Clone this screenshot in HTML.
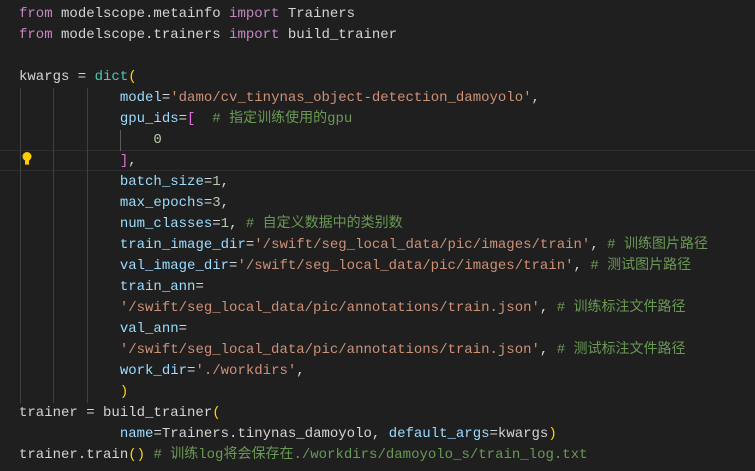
<!DOCTYPE html>
<html><head><meta charset="utf-8"><style>
html,body{margin:0;padding:0;background:#1f1f1f;width:755px;height:471px;overflow:hidden}
.c{position:absolute;left:19px;top:3.5px;font:14px/21px "Liberation Mono","Noto Sans CJK SC",monospace;color:#d4d4d4;white-space:pre}
.k{color:#c586c0}.f{color:#4ec9b0}.p{color:#9cdcfe}.s{color:#ce9178}.m{color:#6a9955}.n{color:#b5cea8}.y{color:#ffd700}.v{color:#da70d6}.fn{color:#dcdcaa}
.g{position:absolute;width:1px;background:#404040}
.hl{position:absolute;left:0;width:755px;top:150px;height:19px;border-top:1px solid #2e2e2e;border-bottom:1px solid #2e2e2e}
</style></head><body>
<div class="hl"></div>
<div class="g" style="left:20px;top:88px;height:315px"></div>
<div class="g" style="left:53px;top:88px;height:315px"></div>
<div class="g" style="left:87px;top:88px;height:315px"></div>
<div class="g" style="left:120px;top:130px;height:21px;background:#5a5a5a"></div>
<svg style="position:absolute;left:21px;top:151px" width="12" height="15" viewBox="0 0 12 15"><circle cx="6" cy="5.5" r="4.5" fill="#ffcc00"/><rect x="4" y="9" width="4" height="4" fill="#ffcc00"/><rect x="4" y="13" width="4" height="1" fill="#b08c00"/></svg>
<div class="c"><span class="k">from</span> modelscope.metainfo <span class="k">import</span> Trainers
<span class="k">from</span> modelscope.trainers <span class="k">import</span> build_trainer

kwargs = <span class="f">dict</span><span class="y">(</span>
            <span class="p">model</span>=<span class="s">'damo/cv_tinynas_object-detection_damoyolo'</span>,
            <span class="p">gpu_ids</span>=<span class="v">[</span>  <span class="m"># 指定训练使用的gpu</span>
                <span class="n">0</span>
            <span class="v">]</span>,
            <span class="p">batch_size</span>=<span class="n">1</span>,
            <span class="p">max_epochs</span>=<span class="n">3</span>,
            <span class="p">num_classes</span>=<span class="n">1</span>, <span class="m"># 自定义数据中的类别数</span>
            <span class="p">train_image_dir</span>=<span class="s">'/swift/seg_local_data/pic/images/train'</span>, <span class="m"># 训练图片路径</span>
            <span class="p">val_image_dir</span>=<span class="s">'/swift/seg_local_data/pic/images/train'</span>, <span class="m"># 测试图片路径</span>
            <span class="p">train_ann</span>=
            <span class="s">'/swift/seg_local_data/pic/annotations/train.json'</span>, <span class="m"># 训练标注文件路径</span>
            <span class="p">val_ann</span>=
            <span class="s">'/swift/seg_local_data/pic/annotations/train.json'</span>, <span class="m"># 测试标注文件路径</span>
            <span class="p">work_dir</span>=<span class="s">'./workdirs'</span>,
            <span class="y">)</span>
trainer = build_trainer<span class="y">(</span>
            <span class="p">name</span>=Trainers.tinynas_damoyolo, <span class="p">default_args</span>=kwargs<span class="y">)</span>
trainer.train<span class="y">()</span> <span class="m"># 训练log将会保存在./workdirs/damoyolo_s/train_log.txt</span></div>
</body></html>
